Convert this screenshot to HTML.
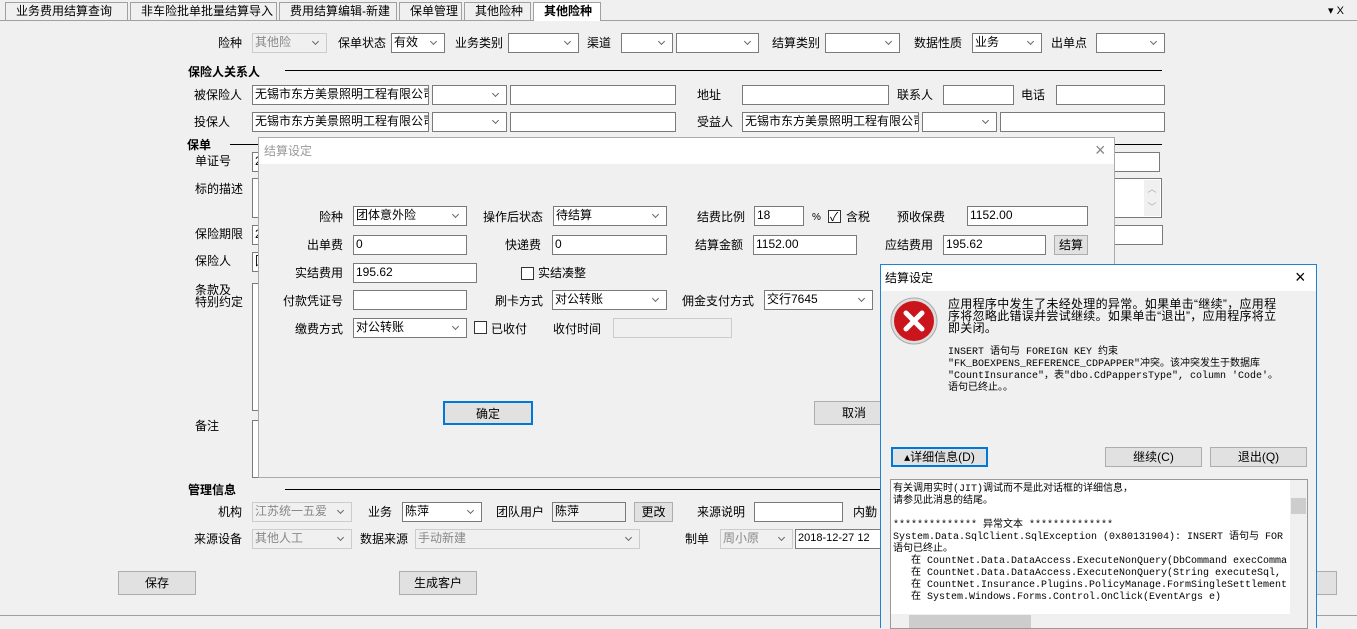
<!DOCTYPE html>
<html><head><meta charset="utf-8"><style>
*{box-sizing:border-box;margin:0;padding:0}
body{width:1357px;height:628px;background:#f0f0f0;position:relative;overflow:hidden;font-family:"Liberation Sans","Noto Sans CJK SC",sans-serif;font-size:12px;color:#000}
.a{position:absolute}
.l{position:absolute;white-space:nowrap;font-size:12px;line-height:14px}
.b{font-weight:bold}
.i{position:absolute;background:#fff;border:1px solid #7a7a7a;font-size:12px;line-height:17px;padding-left:2px;white-space:nowrap;overflow:hidden;height:20px}
.c::after{content:"";position:absolute;right:8px;top:5px;width:4px;height:4px;border-right:1px solid #666;border-bottom:1px solid #666;transform:rotate(45deg)}
.d{background:#f0f0f0;border-color:#ccc;color:#888}
.btn{position:absolute;background:#e1e1e1;border:1px solid #adadad;text-align:center;font-size:12px}
.ln{position:absolute;height:1px;background:#000}
.tab{position:absolute;top:2px;height:18px;border:1px solid #a0a0a0;border-bottom:none;font-size:12px;line-height:16px;padding-left:10px;background:#f0f0f0}
.m{font-family:"Liberation Mono","Noto Sans CJK SC",monospace;font-size:10px;line-height:12px;white-space:pre}
.cb{position:absolute;width:13px;height:13px;border:1px solid #333;background:#fff}
</style></head><body>
<div class="a" style="left:0;top:20px;width:1357px;height:1px;background:#a0a0a0"></div>
<div class="tab" style="left:5px;width:123px">业务费用结算查询</div>
<div class="tab" style="left:130px;width:147px">非车险批单批量结算导入</div>
<div class="tab" style="left:279px;width:118px">费用结算编辑-新建</div>
<div class="tab" style="left:399px;width:63px">保单管理</div>
<div class="tab" style="left:464px;width:67px">其他险种</div>
<div class="tab b" style="left:533px;width:68px;height:19px;background:#fff">其他险种</div>
<div class="l" style="left:1328px;top:4px;font-size:11px">▾ X</div>

<div class="l" style="left:218px;top:36px">险种</div>
<div class="i c d" style="left:252px;top:33px;width:75px">其他险</div>
<div class="l" style="left:338px;top:36px">保单状态</div>
<div class="i c" style="left:391px;top:33px;width:54px">有效</div>
<div class="l" style="left:455px;top:36px">业务类别</div>
<div class="i c" style="left:508px;top:33px;width:71px"></div>
<div class="l" style="left:587px;top:36px">渠道</div>
<div class="i c" style="left:621px;top:33px;width:52px"></div>
<div class="i c" style="left:676px;top:33px;width:83px"></div>
<div class="l" style="left:772px;top:36px">结算类别</div>
<div class="i c" style="left:825px;top:33px;width:75px"></div>
<div class="l" style="left:914px;top:36px">数据性质</div>
<div class="i c" style="left:972px;top:33px;width:70px">业务</div>
<div class="l" style="left:1051px;top:36px">出单点</div>
<div class="i c" style="left:1096px;top:33px;width:69px"></div>

<div class="l b" style="left:188px;top:65px">保险人关系人</div>
<div class="ln" style="left:285px;top:70px;width:877px"></div>
<div class="l" style="left:194px;top:88px">被保险人</div>
<div class="i" style="left:252px;top:85px;width:177px">无锡市东方美景照明工程有限公司</div>
<div class="i c" style="left:432px;top:85px;width:75px"></div>
<div class="i" style="left:510px;top:85px;width:166px"></div>
<div class="l" style="left:697px;top:88px">地址</div>
<div class="i" style="left:742px;top:85px;width:147px"></div>
<div class="l" style="left:897px;top:88px">联系人</div>
<div class="i" style="left:943px;top:85px;width:71px"></div>
<div class="l" style="left:1021px;top:88px">电话</div>
<div class="i" style="left:1056px;top:85px;width:109px"></div>
<div class="l" style="left:194px;top:115px">投保人</div>
<div class="i" style="left:252px;top:112px;width:177px">无锡市东方美景照明工程有限公司</div>
<div class="i c" style="left:432px;top:112px;width:75px"></div>
<div class="i" style="left:510px;top:112px;width:166px"></div>
<div class="l" style="left:697px;top:115px">受益人</div>
<div class="i" style="left:742px;top:112px;width:177px">无锡市东方美景照明工程有限公司</div>
<div class="i c" style="left:922px;top:112px;width:75px"></div>
<div class="i" style="left:1000px;top:112px;width:165px"></div>

<div class="l b" style="left:187px;top:138px">保单</div>
<div class="ln" style="left:230px;top:144px;width:32px"></div>
<div class="ln" style="left:1115px;top:144px;width:47px"></div>
<div class="l" style="left:195px;top:154px">单证号</div>
<div class="l" style="left:195px;top:182px">标的描述</div>
<div class="l" style="left:195px;top:227px">保险期限</div>
<div class="l" style="left:195px;top:254px">保险人</div>
<div class="l" style="left:195px;top:284px;line-height:12px">条款及<br>特别约定</div>
<div class="l" style="left:195px;top:419px">备注</div>
<div class="i" style="left:252px;top:152px;width:20px">2</div>
<div class="i" style="left:252px;top:178px;width:20px;height:40px"></div>
<div class="i" style="left:252px;top:225px;width:20px">2</div>
<div class="i" style="left:252px;top:252px;width:20px">回</div>
<div class="i" style="left:252px;top:283px;width:20px;height:128px"></div>
<div class="i" style="left:252px;top:420px;width:20px;height:58px"></div>
<div class="i" style="left:1100px;top:152px;width:60px"></div>
<div class="i" style="left:1100px;top:178px;width:62px;height:40px"><div class="a" style="right:1px;top:1px;width:16px;height:36px;background:#f0f0f0;color:#aaa;font-size:9px;text-align:center;line-height:18px">︿<br>﹀</div></div>
<div class="i" style="left:1100px;top:225px;width:63px"></div>

<div class="a" style="left:258px;top:137px;width:857px;height:341px;background:#f0f0f0;border:1px solid #aaa">
 <div class="a" style="left:0;top:0;width:855px;height:26px;background:#fff"></div>
 <div class="l" style="left:5px;top:6px;color:#999">结算设定</div>
 <div class="l" style="left:836px;top:3px;font-size:18px;color:#888;line-height:18px">×</div>
</div>
<div class="l" style="left:319px;top:210px">险种</div>
<div class="i c" style="left:353px;top:206px;width:114px">团体意外险</div>
<div class="l" style="left:483px;top:210px">操作后状态</div>
<div class="i c" style="left:553px;top:206px;width:114px">待结算</div>
<div class="l" style="left:697px;top:210px">结费比例</div>
<div class="i" style="left:754px;top:206px;width:50px">18</div>
<div class="l" style="left:812px;top:211px;font-size:10px">%</div>
<div class="cb" style="left:828px;top:210px"><span class="a" style="left:1px;top:-3px;font-size:12px">✓</span></div>
<div class="l" style="left:846px;top:210px">含税</div>
<div class="l" style="left:897px;top:210px">预收保费</div>
<div class="i" style="left:967px;top:206px;width:121px">1152.00</div>

<div class="l" style="left:307px;top:238px">出单费</div>
<div class="i" style="left:353px;top:235px;width:114px">0</div>
<div class="l" style="left:505px;top:238px">快递费</div>
<div class="i" style="left:552px;top:235px;width:115px">0</div>
<div class="l" style="left:695px;top:238px">结算金额</div>
<div class="i" style="left:753px;top:235px;width:104px">1152.00</div>
<div class="l" style="left:885px;top:238px">应结费用</div>
<div class="i" style="left:943px;top:235px;width:103px">195.62</div>
<div class="btn" style="left:1054px;top:235px;width:34px;height:20px;line-height:18px">结算</div>

<div class="l" style="left:295px;top:266px">实结费用</div>
<div class="i" style="left:353px;top:263px;width:124px">195.62</div>
<div class="cb" style="left:521px;top:267px"></div>
<div class="l" style="left:538px;top:266px">实结凑整</div>

<div class="l" style="left:283px;top:294px">付款凭证号</div>
<div class="i" style="left:353px;top:290px;width:114px"></div>
<div class="l" style="left:495px;top:294px">刷卡方式</div>
<div class="i c" style="left:552px;top:290px;width:115px">对公转账</div>
<div class="l" style="left:682px;top:294px">佣金支付方式</div>
<div class="i c" style="left:764px;top:290px;width:109px">交行7645</div>

<div class="l" style="left:295px;top:322px">缴费方式</div>
<div class="i c" style="left:353px;top:318px;width:114px">对公转账</div>
<div class="cb" style="left:474px;top:321px"></div>
<div class="l" style="left:491px;top:322px">已收付</div>
<div class="l" style="left:553px;top:322px">收付时间</div>
<div class="i d" style="left:613px;top:318px;width:119px"></div>
<div class="btn" style="left:443px;top:401px;width:90px;height:24px;line-height:22px;border:2px solid #0078d7">确定</div>
<div class="btn" style="left:814px;top:401px;width:80px;height:24px;line-height:22px">取消</div>

<div class="l b" style="left:188px;top:483px">管理信息</div>
<div class="ln" style="left:285px;top:489px;width:595px"></div>
<div class="l" style="left:218px;top:505px">机构</div>
<div class="i c d" style="left:252px;top:502px;width:100px">江苏统一五爱</div>
<div class="l" style="left:368px;top:505px">业务</div>
<div class="i c" style="left:402px;top:502px;width:80px">陈萍</div>
<div class="l" style="left:496px;top:505px">团队用户</div>
<div class="i" style="left:552px;top:502px;width:74px;background:#f0f0f0">陈萍</div>
<div class="btn" style="left:634px;top:502px;width:39px;height:20px;line-height:18px">更改</div>
<div class="l" style="left:697px;top:505px">来源说明</div>
<div class="i" style="left:754px;top:502px;width:89px"></div>
<div class="l" style="left:853px;top:505px">内勤</div>
<div class="l" style="left:194px;top:532px">来源设备</div>
<div class="i c d" style="left:252px;top:529px;width:100px">其他人工</div>
<div class="l" style="left:360px;top:532px">数据来源</div>
<div class="i c d" style="left:415px;top:529px;width:225px">手动新建</div>
<div class="l" style="left:685px;top:532px">制单</div>
<div class="i c d" style="left:720px;top:529px;width:73px">周小原</div>
<div class="i" style="left:795px;top:529px;width:90px;font-size:11px">2018-12-27 12</div>
<div class="btn" style="left:118px;top:571px;width:78px;height:24px;line-height:22px">保存</div>
<div class="btn" style="left:399px;top:571px;width:78px;height:24px;line-height:22px">生成客户</div>
<div class="btn" style="left:1310px;top:571px;width:27px;height:24px"></div>
<div class="a" style="left:0;top:615px;width:1357px;height:1px;background:#a0a0a0"></div>

<div class="a" style="left:880px;top:264px;width:437px;height:364px;background:#f0f0f0;border:1px solid #1883d7;border-bottom:none">
 <div class="a" style="left:0;top:0;width:435px;height:26px;background:#fff"></div>
 <div class="l" style="left:4px;top:6px">结算设定</div>
 <div class="l" style="left:414px;top:2px;font-size:18px;line-height:20px">×</div>
 <svg class="a" style="left:9px;top:32px" width="48" height="48"><circle cx="24" cy="24" r="23" fill="#ddd" stroke="#aaa"/><circle cx="24" cy="24" r="20" fill="#c9151b"/><path d="M16 16L32 32M32 16L16 32" stroke="#fff" stroke-width="5" stroke-linecap="round"/></svg>
 <div class="a" style="left:67px;top:33px;font-size:12px;line-height:12px;letter-spacing:0.3px;white-space:nowrap">应用程序中发生了未经处理的异常。如果单击“继续”，应用程<br>序将忽略此错误并尝试继续。如果单击“退出”，应用程序将立<br>即关闭。</div>
 <div class="a m" style="left:67px;top:82px">INSERT 语句与 FOREIGN KEY 约束
"FK_BOEXPENS_REFERENCE_CDPAPPER"冲突。该冲突发生于数据库
"CountInsurance"，表"dbo.CdPappersType", column 'Code'。
语句已终止。。</div>
 <div class="btn" style="left:10px;top:182px;width:97px;height:20px;line-height:16px;border:2px solid #0078d7">▴详细信息(D)</div>
 <div class="btn" style="left:224px;top:182px;width:97px;height:20px;line-height:18px">继续(C)</div>
 <div class="btn" style="left:329px;top:182px;width:97px;height:20px;line-height:18px">退出(Q)</div>
 <div class="a" style="left:9px;top:214px;width:418px;height:150px;background:#fff;border:1px solid #999;overflow:hidden">
  <div class="a m" style="left:2px;top:4px">有关调用实时(JIT)调试而不是此对话框的详细信息，
请参见此消息的结尾。

************** 异常文本 **************
System.Data.SqlClient.SqlException (0x80131904): INSERT 语句与 FOR
语句已终止。
   在 CountNet.Data.DataAccess.ExecuteNonQuery(DbCommand execComma
   在 CountNet.Data.DataAccess.ExecuteNonQuery(String executeSql,
   在 CountNet.Insurance.Plugins.PolicyManage.FormSingleSettlement
   在 System.Windows.Forms.Control.OnClick(EventArgs e)</div>
  <div class="a" style="left:399px;top:0;width:17px;height:134px;background:#f0f0f0"><div class="a" style="left:1px;top:18px;width:15px;height:16px;background:#cdcdcd"></div></div>
  <div class="a" style="left:0;top:134px;width:416px;height:16px;background:#f0f0f0"><div class="a" style="left:18px;top:1px;width:122px;height:14px;background:#cdcdcd"></div></div>
 </div>
</div>
</body></html>
